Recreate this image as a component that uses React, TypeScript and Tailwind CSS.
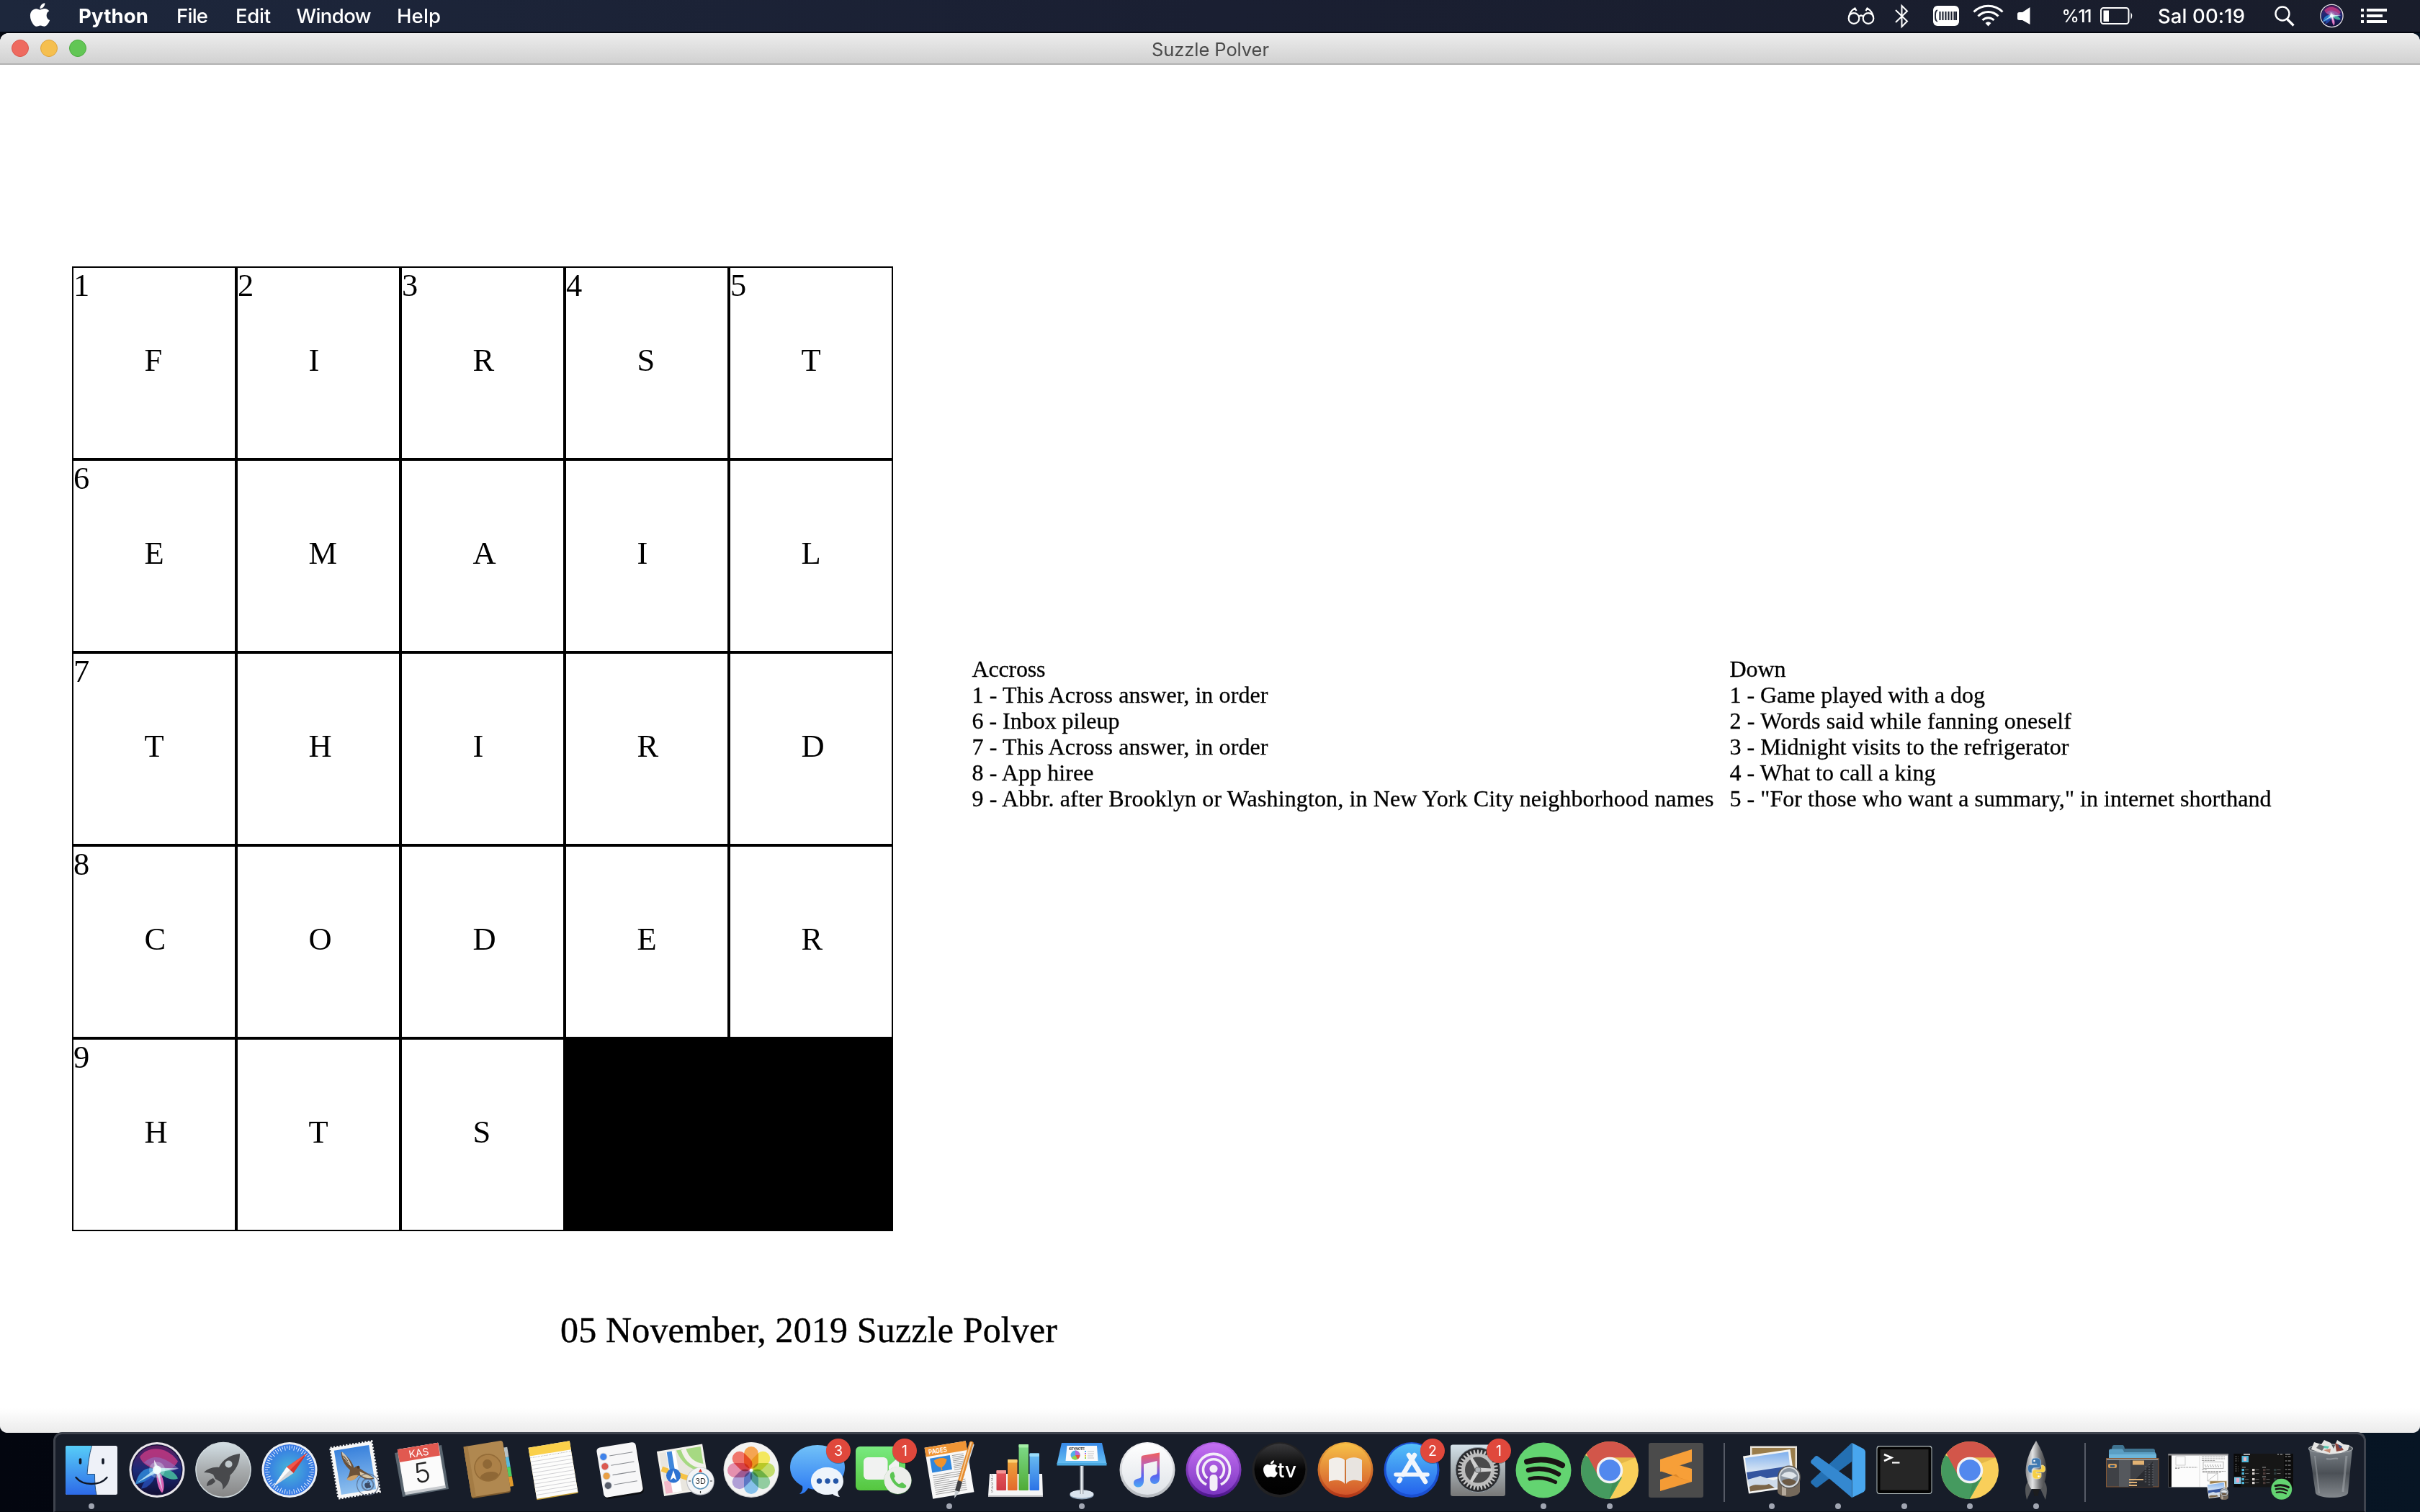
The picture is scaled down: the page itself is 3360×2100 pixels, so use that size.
import React, { useLayoutEffect, useRef, useState } from "react";
import { FaApple } from "react-icons/fa";

/* Sets tracking so that a run of text takes exactly `width` pixels. */
function Fit({ width, children, className = "" }: { width: number; children: string; className?: string }) {
  const ref = useRef<HTMLSpanElement>(null);
  const [spacing, setSpacing] = useState(0);
  useLayoutEffect(() => {
    const el = ref.current;
    if (!el) return;
    const natural = el.getBoundingClientRect().width - spacing * children.length;
    setSpacing((width - natural) / Math.max(1, children.length - 1));
  }, [width, children]);
  return (
    <span className={"block " + className}>
      <span ref={ref} className="inline-block whitespace-pre" style={{ letterSpacing: `${spacing}px` }}>
        {children}
      </span>
    </span>
  );
}

/* ---------- menu bar ---------- */

function SiriFill({ cx, cy, r }: { cx: number; cy: number; r: number }) {
  return (
    <g transform={`translate(${cx} ${cy}) scale(${r / 38})`}>
      <circle r="38.500" fill="#e9e6ea" />
      <circle r="35.500" fill="#16123c" />
      <circle r="34" fill="url(#siriBase)" />
      <path d="M-24 -18 C-14 -34 14 -34 29 -12 C22 2 10 2 0 0 C-12 -4 -20 -8 -24 -18Z" fill="#d23c86" opacity=".75" />
      <path d="M-18 -10 C-6 -22 8 -20 30 -2 C18 4 6 2 0 0Z" fill="#8f6fc0" opacity=".6" />
      <path d="M-30 20 C-26 0 -12 -6 0 0 C-6 12 -18 18 -30 20Z" fill="#2f8fe0" opacity=".8" />
      <path d="M0 0 C10 -6 26 2 29 12 C20 16 8 10 0 0Z" fill="#4fd6a8" opacity=".75" />
      <path d="M0 0 C10 8 12 26 7 32 C1 26 -2 12 0 0Z" fill="#f06ac0" opacity=".9" />
      <path d="M0 0 C-2 14 -12 26 -22 26 C-18 14 -8 4 0 0Z" fill="#2a57c8" opacity=".7" />
      <path d="M-28 18 L0 -3 L30 -2 L3 3 L8 30 L-1 4Z" fill="#d8fbff" opacity=".75" />
      <path d="M-4 -14 L2 -3 L5 2 L-3 3Z" fill="#fff" opacity=".8" />
      <circle r="6" fill="#fff" opacity=".9" />
      <circle r="11" fill="#dff" opacity=".3" />
    </g>
  );
}

function StatusIcons() {
  return (
    <>
      {/* glasses */}
      <svg className="ml-[25px] h-[44px] w-[38px] shrink-0" viewBox="0 0 38 44" fill="none" stroke="#fff" strokeWidth="2.2">
        <circle cx="9" cy="25.500" r="7.300" />
        <circle cx="29" cy="25.500" r="7.300" />
        <path d="M16 23 C18 21 20 21 22 23 M1.800 24 C3 18 6 14 10.500 11.500 L12.500 15 M36.200 24 C35 18 32 14 27.500 11.500 L25.500 15" />
      </svg>
      {/* bluetooth */}
      <svg className="ml-[27px] h-[44px] w-[22px] shrink-0" viewBox="0 0 22 44" fill="none" stroke="#fff" strokeWidth="2">
        <path d="M2 14 L18 29.500 L10.500 37 V8 L18 15.500 L2 31" />
      </svg>
      {/* memory card */}
      <svg className="ml-[32px] h-[44px] w-[38px] shrink-0" viewBox="0 0 38 44">
        <rect x="0" y="8" width="36" height="28" rx="6" fill="#fff" />
        <path d="M9.500 16v12M13.500 16v12M17.500 16v12M21.500 16v12M25.500 16v12M29.500 16v12M32 16v12" stroke="#1a1f2f" strokeWidth="2.100" />
        <path d="M6 14 C3 15 3 18 3 22 C3 26 3 29 6 30" stroke="#1a1f2f" strokeWidth="1.800" fill="none" />
      </svg>
      {/* wifi */}
      <svg className="ml-[17px] h-[44px] w-[44px] shrink-0" viewBox="0 0 44 44" fill="none" stroke="#fff" strokeWidth="3">
        <path d="M1.500 16.500 C12.500 5.500 30.500 5.500 41.500 16.500" />
        <path d="M7.500 22.500 C15.500 14.500 27.500 14.500 35.500 22.500" />
        <path d="M13.500 28 C18 23.500 25 23.500 29.500 28" />
        <path d="M17.500 32 Q21.500 28.500 25.500 32 L21.500 36.500Z" fill="#fff" stroke="none" />
      </svg>
      {/* speaker */}
      <svg className="ml-[18px] h-[44px] w-[20px] shrink-0" viewBox="0 0 20 44" fill="#fff">
        <path d="M2.500 17 H7 L17.500 10 V34 L7 28 H2.500 Q0 28 0 25.500 V19.500 Q0 17 2.500 17Z" />
      </svg>
    </>
  );
}

function MenuBar() {
  return (
    <header className="flex h-[44px] w-full shrink-0 items-center bg-gradient-to-r from-[#1d273c] via-[#1a1f32] to-[#191d2b] font-[Inter,sans-serif] text-[27.5px] leading-[44px] text-white">
      <FaApple className="ml-[36.500px] size-[37px] shrink-0 -translate-y-[2px]" />
      <nav className="ml-[35.500px] flex">
        <Fit width={97} className="w-[136px] font-bold">Python</Fit>
        <Fit width={44} className="w-[82px] font-medium">File</Fit>
        <Fit width={49} className="w-[84.500px] font-medium">Edit</Fit>
        <Fit width={104} className="w-[139.500px] font-medium">Window</Fit>
        <Fit width={61} className="w-[80px] font-medium">Help</Fit>
      </nav>
      <div className="ml-[1908.500px] flex items-center">
        <StatusIcons />
        <Fit width={42} className="ml-[42px] w-[53px] text-[24.500px] font-medium">%11</Fit>
        <svg className="h-[44px] w-[46px] shrink-0" viewBox="0 0 46 44">
          <rect x="1" y="11" width="38.500" height="22" rx="3.500" fill="none" stroke="#fff" strokeWidth="2" />
          <rect x="4.500" y="14.500" width="7.500" height="15.500" fill="#fff" />
          <path d="M42.500 17 Q46 22 42.500 27Z" fill="#fff" />
        </svg>
        <Fit width={121} className="ml-[34.500px] w-[160px] font-medium">Sal 00:19</Fit>
        <svg className="h-[44px] w-[32px] shrink-0" viewBox="0 0 32 44" fill="none" stroke="#fff">
          <circle cx="13" cy="19" r="9.500" strokeWidth="2.400" />
          <path d="M19.500 26.500 L28.500 35.500" strokeWidth="3.200" />
        </svg>
        <svg className="ml-[32px] h-[44px] w-[36px] shrink-0" viewBox="0 0 36 44">
          <SiriFill cx={17.5} cy={22} r={16} />
        </svg>
        <svg className="ml-[22px] h-[44px] w-[38px] shrink-0" viewBox="0 0 38 44" fill="#fff">
          <path d="M0 12h4v4H0zM8 12h28v4H8zM0 20h4v4H0zM8 20h22v4H8zM0 28h4v4H0zM8 28h28v4H8z" />
        </svg>
      </div>
    </header>
  );
}

/* ---------- crossword ---------- */

const rows = ["FIRST", "EMAIL", "THIRD", "CODER", "HTS##"];
const numbers: Record<string, number> = {
  "0-0": 1, "0-1": 2, "0-2": 3, "0-3": 4, "0-4": 5, "1-0": 6, "2-0": 7, "3-0": 8, "4-0": 9,
};

function Grid() {
  return (
    <div className="grid h-[1340px] w-[1140px] shrink-0 grid-cols-5 grid-rows-5 font-['Liberation_Serif',serif] text-[44.5px] leading-[46px] text-black">
      {rows.flatMap((row, r) =>
        row.split("").map((ch, c) =>
          ch === "#" ? (
            <div key={`${r}-${c}`} className="bg-black" />
          ) : (
            <div key={`${r}-${c}`} className="border-2 border-black pt-px">
              <div className="h-[46px]">{numbers[`${r}-${c}`] ?? ""}</div>
              <div className="mt-[58px] pl-[98.500px]">{ch}</div>
            </div>
          )
        )
      )}
    </div>
  );
}

const across: [string, number][] = [
  ["Accross", 102],
  ["1 - This Across answer, in order", 411],
  ["6 - Inbox pileup", 205],
  ["7 - This Across answer, in order", 411],
  ["8 - App hiree", 169],
  ["9 - Abbr. after Brooklyn or Washington, in New York City neighborhood names", 1030],
];
const down: [string, number][] = [
  ["Down", 78],
  ["1 - Game played with a dog", 354.5],
  ["2 - Words said while fanning oneself", 474.5],
  ["3 - Midnight visits to the refrigerator", 471],
  ["4 - What to call a king", 286],
  ['5 - "For those who want a summary," in internet shorthand', 752],
];

function Clues({ lines }: { lines: [string, number][] }) {
  return (
    <div className="flex flex-col">
      {lines.map(([t, w]) => (
        <Fit key={t} width={w} className="h-[36px]">{t}</Fit>
      ))}
    </div>
  );
}

function PuzzleWindow() {
  return (
    <main className="flex h-[1944px] w-full shrink-0 flex-col overflow-hidden rounded-t-[12px] rounded-b-[10px] bg-white">
      <div className="flex h-[44px] shrink-0 items-center border-b-2 border-[#b1b1b1] bg-gradient-to-b from-[#ededed] to-[#d1d1d1] pl-[16px]">
        <div className="flex w-[1583px] gap-[16px]">
          <span className="size-[24px] rounded-full border border-[#d9564c] bg-[#ee6a5f]" />
          <span className="size-[24px] rounded-full border border-[#dca33c] bg-[#f5bf4f]" />
          <span className="size-[24px] rounded-full border border-[#4aab3e] bg-[#62c655]" />
        </div>
        <Fit width={163} className="pt-[3px] font-[Inter,sans-serif] text-[25.500px] leading-[39px] text-[#4a4a4a]">Suzzle Polver</Fit>
      </div>
      <div className="flex grow flex-col pt-[280px]">
        <div className="flex items-start pl-[100px]">
          <Grid />
          <div className="mt-[541px] ml-[109.500px] flex font-['Liberation_Serif',serif] text-[32px] leading-[36px] text-black [-webkit-text-stroke:0.3px_black]">
            <div className="w-[1052px]">
              <Clues lines={across} />
            </div>
            <Clues lines={down} />
          </div>
        </div>
        <Fit width={690} className="mt-[107px] ml-[778px] font-['Liberation_Serif',serif] text-[50px] leading-[60px] text-black [-webkit-text-stroke:0.4px_black]">05 November, 2019 Suzzle Polver</Fit>
        <div className="mt-auto h-[34px] bg-gradient-to-b from-white to-[#ebebeb]" />
      </div>
    </main>
  );
}

/* ---------- dock icons, each drawn in a 92 x 108 box ---------- */

const Badge = ({ n }: { n: string }) => (
  <g>
    <circle cx="75" cy="23.800" r="17.200" fill="#000" opacity=".3" />
    <circle cx="75" cy="23" r="17" fill="#e0483c" />
    <text x="75" y="30" textAnchor="middle" fontSize="19.500" fill="#fff" fontFamily="Inter, sans-serif">{n}</text>
  </g>
);

const Tilt = ({ children }: { children: React.ReactNode }) => (
  <g transform="translate(46 49.500) rotate(-9.300)">{children}</g>
);

const Finder = () => (
  <g>
    <rect x="10" y="16" width="72" height="68" rx="2.500" fill="#eef1f8" />
    <path d="M12.500 16 H46.500 C43 28 41 42 40 55.500 H50.500 C50.500 66 51 76 53 84 H12.500 Q10 84 10 81.500 V18.500 Q10 16 12.500 16Z" fill="url(#finderBlue)" />
    <path d="M46.500 16 C43 28 41 42 40 55.500 H50.500 C50.500 66 51 76 53 84" fill="none" stroke="#24507e" strokeWidth="1" />
    <path d="M30.500 35v5M62 35v5" stroke="#101725" strokeWidth="3.600" strokeLinecap="round" />
    <path d="M24.500 60 C34 72 58 72 67.500 60" fill="none" stroke="#101725" strokeWidth="2.400" strokeLinecap="round" />
  </g>
);

const Launchpad = () => (
  <g>
    <circle cx="46" cy="49.500" r="38.500" fill="#aab0b4" />
    <circle cx="46" cy="49.500" r="38" fill="url(#launch)" stroke="#cfd8dc" strokeWidth="1.500" />
    <path d="M69 27 C56 29 46 34 40 46 C32 45 24 48 19 53 C24 53 29 54 32 56 L35 62 L42 66 C45 69 46 73 45 77 C51 72 55 66 55.500 57 C65 48 69 38 69 27Z" fill="#48494c" />
    <circle cx="53.500" cy="41.500" r="5" fill="#c0c8cc" />
    <path d="M32 61 C27 63 23 66 23 72 C28 71 33 69 35 65Z" fill="#48494c" />
  </g>
);

const Safari = () => (
  <g>
    <circle cx="46" cy="49.500" r="38.500" fill="#eceff3" />
    <circle cx="46" cy="49.500" r="35.500" fill="url(#safari)" />
    {Array.from({ length: 60 }, (_, i) => (
      <path key={i} d={i % 2 ? "M0 -34V-30" : "M0 -34V-27.500"} stroke="#e8f2ff" strokeWidth="1" transform={`translate(46 49.500) rotate(${i * 6})`} />
    ))}
    <path d="M70.500 26 L51.500 54 L42 45.500Z" fill="#d8342c" />
    <path d="M70.500 26 L42 45.500 L46.700 49.700Z" fill="#f0574a" />
    <path d="M23.500 73 L42 45.500 L51.500 54Z" fill="#d5d5d8" />
    <path d="M23.500 73 L42 45.500 L46.700 49.700Z" fill="#fafafa" />
  </g>
);

const Mail = () => (
  <Tilt>
    <rect x="-29" y="-35.500" width="58" height="71" fill="#f7f7f7" />
    <rect x="-29" y="-35.500" width="58" height="71" fill="none" stroke="#f7f7f7" strokeWidth="3" strokeDasharray="2.200 2.200" />
    <rect x="-24.500" y="-31" width="49" height="62" fill="url(#sky)" />
    <path d="M-15 -28 C-8 -22 -2 -12 -1 -3 C3 -6 7 -5 7 -1 C13 5 19 9 24 16 C16 19 8 13 4 8 C0 12 -7 15 -13 10 C-10 7 -8 3 -7 -1 C-13 -8 -17 -18 -15 -28Z" fill="#6e5238" />
    <path d="M-14 -28 C-9 -23 -5 -14 -4 -5 C-10 -11 -15 -19 -14 -28Z" fill="#cfc5b4" />
    <path d="M-13 -22 L-8 -14 M-13 -18 L-7 -10 M-11 -12 L-6 -6" stroke="#5b4a3a" strokeWidth="1" />
    <path d="M-14 11 C-9 7 -3 6 3 8 C-2 14 -9 16 -14 11Z" fill="#cda068" />
    <path d="M6 3 C12 8 18 10 23 15 C16 16 10 12 6 8Z" fill="#d8c8a8" />
    <circle cx="5" cy="-3" r="2" fill="#4a3524" />
    <g fill="none" stroke="#52607a" opacity=".7">
      <circle cx="14" cy="23" r="8" strokeWidth="2" />
      <circle cx="14" cy="23" r="15" strokeWidth="1.200" />
    </g>
    <FaApple x="8" y="17" size="12" color="#3c4a64" />
  </Tilt>
);

const Calendar = () => (
  <g>
    <path d="M9 26 L74 15 L84 76 L20 87Z" fill="#59656f" />
    <g transform="translate(46 47) rotate(-9.500)">
      <rect x="-28" y="-31" width="57" height="64" fill="#c9ccd0" />
      <rect x="-28.500" y="-31" width="57" height="60" fill="#fbfbfb" />
      <rect x="-28.500" y="-31" width="57" height="18" fill="#e15950" />
      <text x="0" y="-16.500" textAnchor="middle" fontSize="14" fill="#fff" fontFamily="Inter, sans-serif">KAS</text>
      <text x="0" y="20" textAnchor="middle" fontSize="38" fontWeight="300" fill="#222" fontFamily="Inter, sans-serif">5</text>
    </g>
  </g>
);

const Contacts = () => (
  <Tilt>
    <rect x="24" y="-27" width="8" height="14" fill="#b9c3c6" />
    <rect x="24" y="-13" width="8" height="14" fill="#58b9dd" />
    <rect x="24" y="1" width="8" height="13" fill="#4fce62" />
    <rect x="24" y="14" width="8" height="14" fill="#e09a2c" />
    <rect x="-28" y="-36" width="55" height="72" rx="3" fill="#7c5a2e" />
    <rect x="-28" y="-37" width="55" height="71" rx="3" fill="#b08850" />
    <rect x="-28" y="-37" width="6" height="71" fill="#a47c45" />
    <circle cx="1" cy="-3" r="18.500" fill="#ac8148" stroke="#946c38" strokeWidth="1.600" />
    <circle cx="1" cy="-8" r="6.500" fill="#8f6836" />
    <path d="M-12 9 C-9 1 11 1 14 9 C8 17 -6 17 -12 9Z" fill="#8f6836" />
  </Tilt>
);

const Notes = () => (
  <Tilt>
    <rect x="-29" y="-35.500" width="58" height="73" fill="#c79f33" />
    <rect x="-29" y="-36" width="58" height="72" fill="#fdfdfc" />
    <rect x="-29" y="-36" width="58" height="12" fill="#fad04a" />
    <path d="M-29 -21.500H29" stroke="#aaa" strokeDasharray="1 1.200" />
    {Array.from({ length: 10 }, (_, i) => (
      <path key={i} d={`M-29 ${-16 + i * 5.2}H29`} stroke="#cfcfd2" strokeWidth=".9" />
    ))}
  </Tilt>
);

const Reminders = () => (
  <Tilt>
    <rect x="-26" y="-32.500" width="55" height="70" rx="5" fill="#0c0e12" />
    <rect x="-27" y="-35" width="55" height="70" rx="5" fill="#f7f7f8" />
    {["#3f82ea", "#dc5a50", "#e9a045", "#585e6b"].map((c, i) => (
      <g key={c}>
        <circle cx="-19" cy={-21.5 + i * 13.5} r="5.600" fill="#d5d8de" />
        <circle cx="-19" cy={-21.5 + i * 13.5} r="4.600" fill={c} />
        <path d={`M-10.500 ${-21.5 + i * 13.5}H22`} stroke="#8a8d92" strokeWidth="1.100" />
      </g>
    ))}
  </Tilt>
);

const Maps = () => (
  <g>
    <g transform="translate(41.500 49.500) rotate(-9.300)">
      <rect x="-31" y="-31" width="64" height="63" fill="#f3f1ec" />
      <rect x="-28" y="-28" width="58" height="57" fill="#e9e6df" />
      <path d="M-4 -28 H30 V8 C14 4 0 -8 -4 -28Z" fill="#a6d982" />
      <path d="M6 -28 C8 -14 16 -4 30 0" fill="none" stroke="#f3f1ec" strokeWidth="7" />
      <path d="M-28 12 H-14 V29 H-28Z" fill="#f2b8c8" />
      <path d="M-28 -6 L30 26" stroke="#f6c244" strokeWidth="7" />
      <path d="M-12 -28V29" stroke="#fff" strokeWidth="13" />
      <path d="M-14 -28V2" stroke="#3f86da" strokeWidth="7" />
    </g>
    <circle cx="29" cy="57.500" r="10" fill="#2d73d2" />
    <path d="M29 50 L33.500 64 L29 60.500 L24.500 64Z" fill="#fff" />
    <circle cx="66.500" cy="65.500" r="19.300" fill="#b9bcc2" />
    <circle cx="66.500" cy="65" r="18.500" fill="#f3f4f6" />
    <circle cx="66.500" cy="65" r="11" fill="#fff" stroke="#5b93b8" strokeWidth="1.600" />
    <path d="M66.500 48 L69 52.500 H64Z" fill="#e02d20" />
    <path d="M50 65h3M80 65h3M66.500 79v3" stroke="#333" strokeWidth="1.200" />
    <text x="66.500" y="69" textAnchor="middle" fontSize="11" fill="#333" fontFamily="Inter, sans-serif">3D</text>
  </g>
);

const Photos = () => (
  <g>
    <circle cx="46" cy="49.500" r="38.500" fill="#c9c9c9" />
    <circle cx="46" cy="49" r="37.800" fill="#f3f3f2" />
    <g className="isolate">
      {["#f5a552", "#f3e85e", "#c2dc6c", "#92cda0", "#86c0ea", "#b09fd6", "#e590ae", "#f0766c"].map((c, i) => (
        <rect key={c} x="-10" y="-33" width="20" height="31" rx="10" fill={c} className="mix-blend-multiply" transform={`translate(46 50) rotate(${i * 45})`} />
      ))}
    </g>
    <circle cx="46" cy="50" r="2" fill="#fff" />
  </g>
);

const Messages = () => (
  <g>
    <path d="M46 15 C67 15 84 28 84 46 C84 65 67 77 46 77 C41 77 37 76 33 75 C30 80 26 83 21 83 C25 80 26 76 25 72 C14 66 8 57 8 46 C8 28 25 15 46 15Z" fill="url(#msg)" />
    <path d="M59 46 C72 46 82 54 82 65 C82 71 79 76 74.500 79.500 C74 82 75 85 77 87 C72 86.500 69 85 67 83 C64.500 83.700 62 84 59 84 C47 84 37 76 37 65 C37 54 47 46 59 46Z" fill="#eef4fb" />
    <circle cx="48.500" cy="65" r="3.700" fill="#2456a8" />
    <circle cx="60" cy="65" r="3.700" fill="#2456a8" />
    <circle cx="71.500" cy="65" r="3.700" fill="#2456a8" />
    <Badge n="3" />
  </g>
);

const FaceTime = () => (
  <g>
    <rect x="7" y="17" width="69" height="61" rx="6" fill="url(#ft)" />
    <rect x="18" y="32" width="33.500" height="31" rx="6" fill="#f1f2f1" />
    <path d="M53 44 L64 34 Q67 33 67 36 V60 L53 51Z" fill="#f1f2f1" />
    <circle cx="65.500" cy="64.500" r="19.300" fill="#48a23c" opacity=".5" />
    <circle cx="65.500" cy="64" r="19" fill="#eceeea" />
    <path d="M57 53 C54 55 54 59 57 64 C61 71 67 75 73 75 C76 75 78 73 77 71 L72 67 C70 67 69 69 67 69 C64 68 61 63 60.500 61 C61 59.500 62 59 61.500 58 L60 53 C59.500 52 58 52 57 53Z" fill="#5bc552" />
    <Badge n="1" />
  </g>
);

const Pages = () => (
  <g>
    <Tilt>
      <rect x="-29" y="-36" width="58" height="72" fill="#f8f8f8" />
      <rect x="-29" y="-36" width="58" height="13" fill="#ef9535" />
      <text x="-24.500" y="-25.500" fontSize="9.500" fontWeight="600" fill="#fff" fontFamily="Inter, sans-serif" textLength="26" lengthAdjust="spacingAndGlyphs">PAGES</text>
      <rect x="-24" y="-20" width="28" height="20" fill="#2f86dc" />
      <path d="M-19 -16 C-14 -19 -5 -19 -1 -15 C-3 -9 -7 -6 -9.500 -5 L-9.500 -1 H-11 V-5 C-15 -7 -18 -10 -19 -16Z" fill="#f0922b" />
      {Array.from({ length: 9 }, (_, i) => (
        <path key={i} d={`M7 ${-19 + i * 2.5}H23`} stroke="#999" strokeWidth=".9" />
      ))}
      {Array.from({ length: 10 }, (_, i) => (
        <path key={i} d={`M-24 ${4.5 + i * 2.9}H${i === 3 ? -2 : 20}`} stroke="#999" strokeWidth=".9" />
      ))}
    </Tilt>
    <path d="M74 11 Q77 8 80 12 L64 66 L58 64Z" fill="#e58a2c" />
    <path d="M76.500 11 L61 64" stroke="#f7cd98" strokeWidth="1.800" />
    <path d="M58 64 L64 66 L60 80 L54 78Z" fill="#3d3d40" />
    <path d="M54 78 L60 80 L53 89Z" fill="#c8cdd2" />
    <path d="M80 14 L71 43" stroke="#d5dce2" strokeWidth="1.500" />
  </g>
);

const Numbers = () => (
  <g>
    <path d="M10 55 H83 L84 86 H8Z" fill="#f5f5f6" />
    <path d="M8 85 H84 V87 H8Z" fill="#b9b9bd" />
    {[1, 2, 3, 4, 5].map((n, i) => (
      <text key={n} x="12" y={60 + i * 5.3} fontSize="4.500" fill="#555" fontFamily="Inter, sans-serif">{n}</text>
    ))}
    {[
      [19.5, 50, "#e4575c", "#cf3a44", "#f39596"],
      [35, 35, "#efa63c", "#e3692c", "#fbd072"],
      [50.5, 14, "#7fdc8b", "#4faa35", "#a4f0a6"],
      [65.5, 26.5, "#6cc0f2", "#2b72e6", "#9adcfa"],
    ].map(([x, y, a, b, t], i) => (
      <g key={i}>
        <linearGradient id={`nb${i}`} x1="0" y1="0" x2="0" y2="1">
          <stop offset="0" stopColor={a as string} />
          <stop offset="1" stopColor={b as string} />
        </linearGradient>
        <rect x={x} y={y} width="13.500" height={78 - (y as number)} rx="1" fill={`url(#nb${i})`} />
        <rect x={x} y={y} width="13.500" height="4.500" rx="1" fill={t as string} />
      </g>
    ))}
  </g>
);

const Keynote = () => (
  <g>
    <ellipse cx="46" cy="84.500" rx="16.500" ry="6" fill="#8fa3b8" />
    <ellipse cx="46" cy="83" rx="16.500" ry="5.700" fill="#dbe4ee" />
    <rect x="43.500" y="44" width="5" height="39" fill="#a9b0b8" />
    <rect x="45" y="44" width="1.800" height="39" fill="#e8ecf0" />
    <path d="M18 12 H74 L80.500 41 H11.500Z" fill="url(#key)" />
    <path d="M11.500 40 H80.500 V43.500 H11.500Z" fill="#4aa8e0" />
    <path d="M25.500 16 H67 L68.500 37 H23.500Z" fill="#fbfbfb" />
    <text x="28" y="21.500" fontSize="5" fontWeight="700" fill="#444" fontFamily="Inter, sans-serif" textLength="22">KEYNOTE</text>
    <circle cx="37" cy="29" r="6.500" fill="#54aee8" />
    <path d="M37 29 V22.500 A6.500 6.500 0 0 1 43.500 29Z" fill="#b868d8" />
    <path d="M37 29 H43.500 A6.500 6.500 0 0 1 40 34.700Z" fill="#e8503c" />
    <path d="M37 29 L40 34.700 A6.500 6.500 0 0 1 31.500 32.500Z" fill="#8fd44c" />
    <path d="M50 24h2" stroke="#54aee8" strokeWidth="2" />
    <path d="M50 27h2" stroke="#b868d8" strokeWidth="2" />
    <path d="M50 30h2" stroke="#f2c230" strokeWidth="2" />
    <path d="M50 33h2" stroke="#8fd44c" strokeWidth="2" />
    <path d="M54 24h9M54 27h9M54 30h8M54 33h9" stroke="#bbb" strokeWidth=".9" />
  </g>
);

const Disc = ({ edge, fill }: { edge: string; fill: string }) => (
  <g>
    <circle cx="46" cy="49.500" r="38.500" fill={edge} />
    <circle cx="46" cy="48.500" r="35.500" fill={fill} />
  </g>
);

const Music = () => (
  <g>
    <Disc edge="url(#discEdge)" fill="url(#disc)" />
    <path d="M63 25.500 V61 C63 66 60 69 56 69 C52 69 50 66 50 63 C50 59 53 57 56.500 56.500 C58.500 56 59.500 55.500 59.500 53 V37 L41 41.500 V65 C41 70 38 73 34 73.500 C30 74 27 71 27 68 C27 64 30 62 34 61.500 C36.500 61 37.500 60 37.500 58 V33 C37.500 31 38 30 40 29.500Z" fill="url(#note)" />
  </g>
);

const Podcasts = () => (
  <g>
    <Disc edge="url(#podEdge)" fill="url(#pod)" />
    <g fill="none" stroke="#f3eef8" strokeWidth="3.600">
      <path d="M36 70 A22.500 22.500 0 1 1 56 70" />
      <path d="M37.500 61 A14.500 14.500 0 1 1 54.500 61" />
    </g>
    <circle cx="46" cy="48" r="5.600" fill="#f3eef8" />
    <rect x="40.500" y="56" width="11" height="23" rx="5" fill="#f3eef8" />
  </g>
);

const TV = () => (
  <g>
    <Disc edge="#222224" fill="url(#tv)" />
    <FaApple x="19.500" y="34.500" size="27" color="#fff" />
    <text x="43" y="59.500" fontSize="28" fontWeight="500" fill="#fff" fontFamily="Inter, sans-serif" textLength="26" lengthAdjust="spacingAndGlyphs">tv</text>
  </g>
);

const Books = () => (
  <g>
    <Disc edge="url(#bookEdge)" fill="url(#book)" />
    <path d="M23 36 C28 31 41 31 45 36 V69 C41 62 28 63 23 66Z" fill="#f2eeea" />
    <path d="M69 36 C64 31 51 31 47 36 V69 C51 62 64 63 69 66Z" fill="#e8e4e0" />
    <path d="M46 35V69" stroke="#b9683a" strokeWidth="1" />
  </g>
);

const AppStore = () => (
  <g>
    <Disc edge="#1a4fd0" fill="url(#store)" />
    <g stroke="#f2f6fc" strokeWidth="6.500" strokeLinecap="round">
      <path d="M50 29 L34 56" />
      <path d="M42 29 L65 66" />
      <path d="M24 56 H68" strokeWidth="5.500" />
      <path d="M28.500 65 L30 62.500" />
    </g>
    <Badge n="2" />
  </g>
);

const SystemPrefs = () => (
  <g>
    <rect x="8" y="14.500" width="76" height="71.500" rx="3" fill="url(#prefs)" />
    <circle cx="46" cy="49.500" r="31" fill="#2b2c2f" stroke="#8f9aa3" strokeWidth="1" />
    {Array.from({ length: 32 }, (_, i) => (
      <path key={i} d="M-1.600 -22 L-.9 -28 H.9 L1.600 -22Z" fill="#c4c4c4" transform={`translate(46 49.500) rotate(${i * 11.25})`} />
    ))}
    <circle cx="46" cy="49.500" r="20.500" fill="#4a4a4b" stroke="#bdbdbd" strokeWidth="5" />
    {[90, 210, 330].map((a) => (
      <path key={a} d="M-3 -1 L-2 -19 H2 L3 -1Z" fill="#cfcfcf" transform={`translate(46 49.500) rotate(${a})`} />
    ))}
    <circle cx="46" cy="49.500" r="4" fill="#aeb2b6" stroke="#6b6b6b" strokeWidth="1" />
    <Badge n="1" />
  </g>
);

const SpotifyMark = () => (
  <g>
    <circle cx="46" cy="50" r="38.500" fill="#63d471" />
    <g fill="none" stroke="#191414" strokeLinecap="round">
      <path d="M23 38 C40 33.500 58 35 72 43" strokeWidth="8" />
      <path d="M25 50 C39 46.500 54 48 67 55.500" strokeWidth="6.500" />
      <path d="M27 62 C38 59.500 51 60.500 62.500 66.500" strokeWidth="5.200" />
    </g>
  </g>
);

const Chrome = () => (
  <g transform="translate(46 50)">
    <circle r="40" fill="#f9cf5a" />
    <path d="M0 0 L-34 -21 A40 40 0 0 0 0 40 L17 10Z" fill="#459a5f" />
    <path d="M-32.500 -23.300 A40 40 0 0 1 36 -17.500 H0 L-15.500 9Z" fill="#d2564a" />
    <path d="M0 -17.500 H36 L15 -9Z" fill="#d9a83c" opacity=".6" />
    <path d="M-1 40 L17 5 L4 17Z" fill="#37824e" opacity=".5" />
    <circle r="18.300" fill="#f3f3f3" />
    <circle r="14.800" fill="#5288ee" />
  </g>
);

const Sublime = () => (
  <g>
    <rect x="8" y="12" width="76" height="76" rx="3" fill="#4b4b4b" />
    <path d="M24 63 L68 48 V66 L24 79Z" fill="#f49b35" />
    <path d="M24 51 L68 66 L68 48 L50.500 43 L24 35Z" fill="#f79f38" />
    <path d="M41 57 L68 66 L52 61 L46 55.500Z" fill="#c9761c" opacity=".6" />
    <path d="M24 35 L68 21 V38 L24 52Z" fill="#f79f38" />
  </g>
);

const Preview = () => (
  <g>
    <rect x="16" y="16.500" width="65" height="44" fill="#e9e4da" />
    <rect x="18.500" y="19" width="60" height="40" fill="#9a7d4a" />
    <path d="M6 30.500 L71.500 21 L79 73 L14 82.500Z" fill="#f4f4f2" />
    <path d="M9 33 L69 24.300 L71.300 46 L11.600 55Z" fill="url(#photoSky)" />
    <path d="M11 53 L71.300 44 L73 56 L13 65Z" fill="#34559f" />
    <path d="M12.500 63 L30 58 L48 64 L74 54 L76 71 L16 79.500Z" fill="#cfdceb" />
    <path d="M15 73 C24 67 34 73 42 69 L50 74.500 L16 79.500Z" fill="#7b6548" />
    <path d="M54 60 V80 C56 89 82 89 85 80 V60Z" fill="#75695b" />
    <path d="M60 70 V85 H66 V72Z" fill="#b5aa9c" />
    <circle cx="70" cy="59.500" r="16" fill="#57534f" />
    <circle cx="70" cy="59.500" r="14.500" fill="#d8dcdf" />
    <circle cx="70" cy="59.500" r="12.500" fill="#8d97a2" />
    <path d="M59 58 C64 50 76 50 81 58 L74 62 L66 60Z" fill="#dfe5ea" />
    <path d="M60 65 C66 60 76 62 80 66 C76 73 64 73 60 65Z" fill="#6d5a44" />
  </g>
);

const VSCode = () => (
  <g>
    <path d="M65 12 L9.500 64 Q7 66 9 68.500 L14 73 Q16 75 18.500 73 L65 38Z" fill="#2470b3" />
    <path d="M65 88 L9.500 41 Q7 39 9 36 L14 31 Q16 29 18.500 31 L65 64Z" fill="#3488d0" />
    <path d="M65.500 12 L80 19.500 Q84 21.500 84 25 V75 Q84 79 80 81 L65.500 88Z" fill="#48a6ee" />
  </g>
);

const Terminal = () => (
  <g>
    <rect x="7.500" y="16" width="77" height="67" rx="4" fill="#b4bfc0" />
    <rect x="8.500" y="17.200" width="75" height="64.800" rx="3.500" fill="#030303" />
    <rect x="12.500" y="21" width="67" height="56.500" fill="#262626" />
    <path d="M18 28 L28 32.500 L18 37" fill="none" stroke="#fff" strokeWidth="2.800" />
    <path d="M29 39.500H39.500" stroke="#fff" strokeWidth="2.200" />
  </g>
);

const PyRocket = () => (
  <g>
    <path d="M36 64 C30 70 30 78 33 91 L40 76Z M56 64 C62 70 62 78 59 91 L52 76Z" fill="#55575a" />
    <path d="M41 74 H51 L48.500 86 H43.500Z" fill="#1c1d1f" />
    <path d="M46 9 C54 22 60 36 60.500 50 C60.500 60 57 70 53 76 H39 C35 70 31.500 60 31.500 50 C32 36 38 22 46 9Z" fill="url(#rocket)" />
    <path d="M46 33 C40 33 40 36 40 38 V41 H47 V42.500 H37 C33.500 42.500 33.500 53 38 53.500 H40 V50 C40 48 42 46.500 44 46.500 H49 C51 46.500 52.500 45 52.500 43 V38 C52.500 35 50 33 46 33Z" fill="#3f78b0" stroke="#a9c4de" strokeWidth=".7" />
    <path d="M47 62 C53 62 53 59 53 57 V54 H46 V52.500 H56 C59.500 52.500 59.500 44 55.500 43 H53.500 V46 C53.500 48 52 49.500 50 49.500 H44 C42 49.500 41 51 41 53 V57 C41 60 43 62 47 62Z" fill="#f6cf46" stroke="#fae9a8" strokeWidth=".7" />
    <circle cx="43.500" cy="37" r="1.300" fill="#fff" />
    <circle cx="49.500" cy="58.500" r="1.300" fill="#fff" />
  </g>
);

const Folder = () => (
  <g>
    <path d="M17 22 Q17 15 20 15 H32 Q34 15 35 20 H74 Q77 20 77 23 V30 H17Z" fill="#3f7390" />
    <path d="M13 30 V23 Q13 20.500 16 20.500 H31 Q33 20.500 34 25 H76 Q78.500 25 78.500 28 V36 H13Z" fill="#5b9fc4" />
    <rect x="13" y="28" width="66" height="8" fill="#6db5da" />
    <rect x="9.500" y="33.500" width="72.500" height="39.500" fill="#3f4146" stroke="#8a5a34" strokeWidth="1" />
    <rect x="10" y="34" width="71.500" height="2" fill="#8f8f8f" />
    <rect x="27" y="36" width="16" height="37" fill="#55585d" />
    <rect x="12" y="41" width="12" height="6" rx="2" fill="#d59a55" />
    <rect x="15" y="43" width="6" height="3" fill="#355878" />
    <rect x="46" y="36.500" width="16" height="6" fill="#e2b273" />
    <path d="M40 73 L74 38 V73Z" fill="#2a2c31" />
    <path d="M64 44v24M69 41v30M74 41v30" stroke="#4f5258" strokeWidth="2.500" strokeDasharray="2 1.500" />
    <path d="M41 63h20M41 67h11M41 71h11" stroke="#e0b277" strokeWidth="2" />
  </g>
);

const DocWindow = () => (
  <g>
    <rect x="4.500" y="27" width="83" height="46.500" fill="#fcfcfc" />
    <rect x="4.500" y="27" width="4.500" height="46.500" fill="#0b0b0d" />
    <rect x="4.500" y="27" width="83" height="2.500" fill="#8b8b8e" />
    <path d="M48 29.500V73" stroke="#ddd" strokeWidth="1" />
    <rect x="15" y="31" width="13" height="12" fill="none" stroke="#bbb" strokeWidth=".7" />
    <path d="M14 46H45M14 47.500H20" stroke="#999" strokeWidth=".9" strokeDasharray="3 .8" />
    <path d="M51 31.500H83M51 34H83M51 36.500H70M51 49H58M52 51.500H84M52 53H78" stroke="#999" strokeWidth=".9" strokeDasharray="3 .8" />
    <rect x="53" y="38.500" width="28" height="9" fill="none" stroke="#999" strokeWidth=".7" />
    <path d="M55 43H79M56 45H78" stroke="#888" strokeWidth="1" strokeDasharray="1.500 2" />
    <path d="M59 54H73V65H59ZM59 65L73 54" fill="none" stroke="#aaa" strokeWidth=".7" />
    <g transform="translate(55.500 58) scale(.38)"><Preview /></g>
  </g>
);

const SpotifyWindow = () => (
  <g>
    <rect x="3.500" y="27" width="82.500" height="46.500" fill="#161616" />
    <rect x="3.500" y="27" width="10" height="46.500" fill="#0a0a0a" />
    <rect x="73" y="27" width="13" height="46.500" fill="#0c0c0c" />
    <path d="M17 28H26" stroke="#eee" strokeWidth="1.400" />
    <path d="M64 28H66M68 28H71M75 28H82" stroke="#bbb" strokeWidth="1" />
    <rect x="14.500" y="30" width="9.500" height="9" fill="#4fb4d6" />
    <rect x="17" y="32" width="4" height="5" fill="#e9b7c0" />
    <path d="M5 31H10M5 34H10M5 37H10M5 42H9M5 45H10M5 48H10M5 51H10" stroke="#555" strokeWidth="1" strokeDasharray="3 1" />
    <rect x="4" y="59.500" width="9.500" height="9.500" fill="#7cc5e4" />
    <rect x="7" y="61" width="4" height="6" fill="#e8a8c4" />
    {[48, 53, 61, 66].map((y) =>
      [14.5, 29, 44, 59].map((x, i) => (
        <g key={`${x}-${y}`}>
          <rect x={x} y={y} width="3.500" height="3.200" fill={["#4fb4d6", "#d8d2ce", "#4a3a38", "#2c3a3c"][i]} />
          <path d={`M${x + 4.5} ${y + 1.5}h5`} stroke="#777" strokeWidth=".8" />
        </g>
      ))
    )}
    <path d="M15 46H20M43 46H48M15 59H20M43 59H48" stroke="#aaa" strokeWidth=".9" />
    {[31, 37, 43, 49, 55, 60].map((y) => (
      <path key={y} d={`M75 ${y}h2M78.500 ${y}h4`} stroke="#aaa" strokeWidth="1.200" />
    ))}
    <g transform="translate(52.500 57.500) scale(.375)"><SpotifyMark /></g>
  </g>
);

const Trash = () => (
  <g>
    <path d="M16 20 H76 L70 82 C66 90 30 90 25 82Z" fill="url(#trash)" />
    <ellipse cx="46" cy="20" rx="30.500" ry="6" fill="#50555b" stroke="#9ba0a5" strokeWidth="1.300" />
    <path d="M19 21 L23 11 L33 14 L37 8 L46 12 L50 20 L55 8 L64 14 L72 15 L70 22 L60 26 L44 28 L30 25Z" fill="#e6e6e4" />
    <path d="M30 14 L38 17 L34 23 L26 19Z" fill="#6b6d70" />
    <path d="M52 12 L60 16 L64 22 L54 24Z" fill="#8a4038" />
    <path d="M56 14 L62 17 L59 20Z" fill="#35548a" />
    <path d="M37 16 L44 17 L42 20 L36 19Z" fill="#58c8b0" />
    <path d="M36 22 L46 20 L45 26Z" fill="#c78a72" />
    <path d="M24 30 L30 82" stroke="#b3b7bb" strokeWidth="2" opacity=".4" />
    <path d="M68 30 L63 80" stroke="#c4c8cc" strokeWidth="3" opacity=".35" />
    <path d="M40 34 C46 36 52 32 56 34" stroke="#c4c8cc" strokeWidth="2" fill="none" opacity=".4" />
  </g>
);

const SiriApp = () => <SiriFill cx={46} cy={49.5} r={38} />;

function Slot({ icon: Icon, dot = false }: { icon: React.FC; dot?: boolean }) {
  return (
    <div className="h-[107px] w-[91.680px] shrink-0">
      <svg className="h-[108px] w-[92px] overflow-visible" viewBox="0 0 92 108">
        <Icon />
        {dot && <circle cx="46" cy="100" r="4" fill="#a0a5b1" />}
      </svg>
    </div>
  );
}

const grad = (id: string, stops: string[], horizontal = false) => (
  <linearGradient key={id} id={id} x1="0" y1="0" x2={horizontal ? 1 : 0} y2={horizontal ? 0 : 1}>
    {stops.map((c, i) => (
      <stop key={i} offset={i / (stops.length - 1)} stopColor={c} />
    ))}
  </linearGradient>
);

function Gradients() {
  return (
    <svg className="absolute size-0">
      <defs>
        {grad("finderBlue", ["#57cdf8", "#2d6ae8"])}
        {grad("siriBase", ["#5a1c5e", "#1b2a78", "#120f36"])}
        {grad("launch", ["#d3dfe5", "#a8acae", "#858585"])}
        {grad("sky", ["#3a82dc", "#8fc0ee"])}
        {grad("photoSky", ["#7fb0ee", "#e4ecf4"])}
        {grad("msg", ["#72c2f8", "#2b78f2"])}
        {grad("ft", ["#79ea80", "#55c63f"])}
        {grad("key", ["#3688e6", "#66bff2"])}
        {grad("disc", ["#ffffff", "#dfe3e8"])}
        {grad("discEdge", ["#f5f5f7", "#b5b9be"])}
        {grad("note", ["#f0605c", "#c062b0", "#5a64f0", "#49a8f4"])}
        {grad("pod", ["#c470f2", "#7b35c0"])}
        {grad("podEdge", ["#b562e8", "#4b158a"])}
        {grad("tv", ["#3a3a3c", "#050505", "#000000"])}
        {grad("book", ["#f7c148", "#d2552a"])}
        {grad("bookEdge", ["#f0b040", "#b03418"])}
        {grad("store", ["#56c1f8", "#2463ec"])}
        {grad("prefs", ["#d4e2ea", "#777777"])}
        {grad("rocket", ["#8a8b8d", "#e4e5e6", "#77787a", "#3a3b3d"], true)}
        {grad("trash", ["#7d8389", "#4b5056", "#83888d"])}
        <radialGradient id="safari">
          <stop offset="0" stopColor="#48b8d8" />
          <stop offset="1" stopColor="#3474e4" />
        </radialGradient>
      </defs>
    </svg>
  );
}

const Divider = () => (
  <div className="w-[42px] shrink-0 pt-[12px] pl-[21px]">
    <div className="h-[82px] w-[2px] bg-[#565b66]" />
  </div>
);

const apps: [React.FC, boolean?][] = [
  [Finder, true], [SiriApp], [Launchpad], [Safari], [Mail], [Calendar], [Contacts], [Notes], [Reminders],
  [Maps], [Photos], [Messages], [FaceTime], [Pages, true], [Numbers], [Keynote, true], [Music], [Podcasts],
  [TV], [Books], [AppStore], [SystemPrefs], [SpotifyMark, true], [Chrome, true], [Sublime],
];
const running: React.FC[] = [Preview, VSCode, Terminal, Chrome, PyRocket];
const stacks: React.FC[] = [Folder, DocWindow, SpotifyWindow, Trash];

function Dock() {
  return (
    <footer className="relative -mt-px flex h-[111px] shrink-0 pl-[74px]">
      <div className="flex w-[3211px] rounded-t-[12px] border-[3px] border-b border-[#3f444e] border-b-[#0b0e14] bg-[#171d29] pl-[3.500px]">
        {apps.map(([Icon, dot], i) => (
          <Slot key={i} icon={Icon} dot={dot} />
        ))}
        <Divider />
        {running.map((Icon, i) => (
          <Slot key={i} icon={Icon} dot />
        ))}
        <Divider />
        {stacks.map((Icon, i) => (
          <Slot key={i} icon={Icon} />
        ))}
      </div>
    </footer>
  );
}

export default function App() {
  return (
    <div className="flex h-[2100px] w-[3360px] flex-col overflow-hidden bg-gradient-to-r from-[#03060f] to-[#071524]">
      <Gradients />
      <MenuBar />
      <div className="h-[2px] w-full shrink-0 bg-[#03060f]" />
      <PuzzleWindow />
      <Dock />
    </div>
  );
}
